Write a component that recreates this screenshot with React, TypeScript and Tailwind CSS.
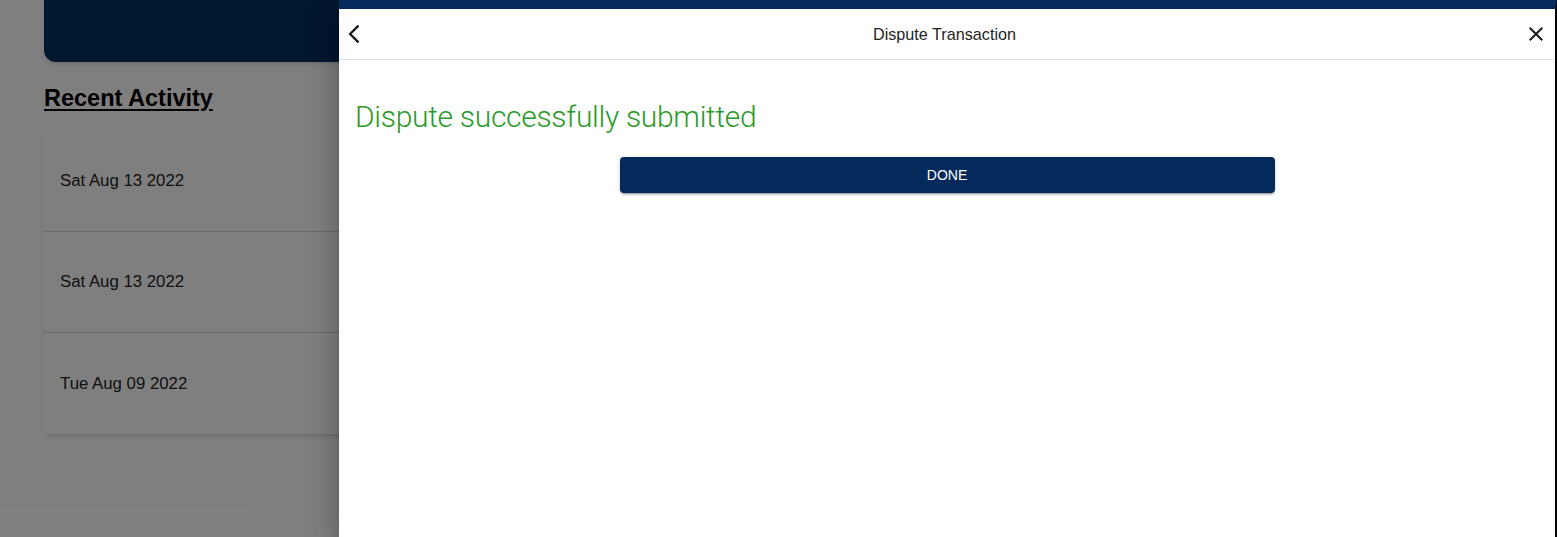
import { ReactNode } from "react";

const activity = ["Sat Aug 13 2022", "Sat Aug 13 2022", "Tue Aug 09 2022"];

function Row({ children, last }: { children: ReactNode; last?: boolean }) {
    return (
        <div className={`h-[101px] flex items-center px-4 ${last ? "" : "border-b border-gray-300"}`}>
            <span className="text-[16.8px] text-[#222]">{children}</span>
        </div>
    );
}

export default function App() {
    return (
        <div className="relative min-h-[537px] h-[537px] overflow-hidden bg-white font-['Liberation_Sans',Arial,sans-serif]">
            {/* Page behind the drawer */}
            <div className="mx-[44px]">
                <div className="h-[62px] bg-[#002e5f] rounded-b-xl shadow-md" />
                <h2 className="mt-[22px] text-[23.5px] leading-[28px] font-bold text-black underline underline-offset-[3px]">
                    Recent Activity
                </h2>
                <div className="mt-[19px] bg-white rounded shadow-md">
                    {activity.map((d, i) => (
                        <Row key={i} last={i === activity.length - 1}>
                            {d}
                        </Row>
                    ))}
                </div>
            </div>

            {/* Backdrop */}
            <div className="absolute inset-0 bg-black/50" />

            {/* Drawer */}
            <div className="absolute top-0 bottom-0 left-[339px] right-0 bg-white border-t-[9px] border-t-[#042a5c] border-r-2 border-r-black shadow-[0_8px_10px_-5px_rgba(0,0,0,0.2),0_16px_24px_2px_rgba(0,0,0,0.14),0_6px_30px_5px_rgba(0,0,0,0.12)] flex flex-col">
                <div className="h-[51px] border-b border-[#dcdcdc] flex items-center justify-between pl-[4px] pr-[7px]">
                    <button className="w-[22px] h-[22px] flex items-center justify-center text-[#1a1a1a]">
                        <svg viewBox="0 0 24 24" width="22" height="22" fill="currentColor">
                            <path d="M17.77 3.77 16 2 6 12l10 10 1.77-1.77L9.54 12z" />
                        </svg>
                    </button>
                    <span className="text-[16.2px] text-[#1f1f1f]">Dispute Transaction</span>
                    <button className="w-[24px] h-[24px] flex items-center justify-center text-[#1a1a1a]">
                        <svg viewBox="0 0 24 24" width="24" height="24" fill="currentColor">
                            <path d="M19 6.41 17.59 5 12 10.59 6.41 5 5 6.41 10.59 12 5 17.59 6.41 19 12 13.41 17.59 19 19 17.59 13.41 12z" />
                        </svg>
                    </button>
                </div>
                <div className="px-4 pt-[39px]">
                    <h1 className="text-[30px] leading-[36px] tracking-[-0.3px] font-light text-[#2a9a2a] font-['Roboto',sans-serif]">
                        Dispute successfully submitted
                    </h1>
                    <button className="mt-[22px] mx-auto flex items-center justify-center w-[655px] h-[36px] rounded bg-[#042a5c] text-white text-[14px] shadow-[0_3px_1px_-2px_rgba(0,0,0,0.2),0_2px_2px_0_rgba(0,0,0,0.14),0_1px_5px_0_rgba(0,0,0,0.12)]">
                        DONE
                    </button>
                </div>
            </div>
        </div>
    );
}
